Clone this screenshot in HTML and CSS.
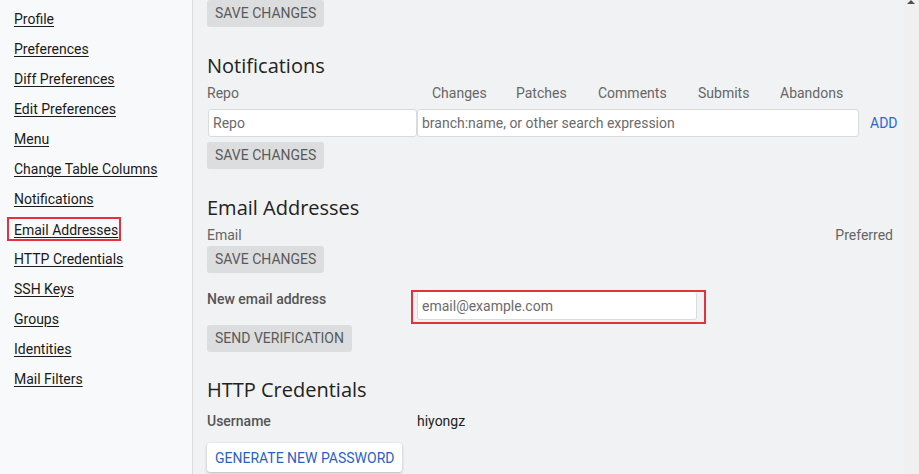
FILE: index.html
```html
<!DOCTYPE html>
<html>
<head>
<meta charset="utf-8">
<link rel="stylesheet" href="styles.css">
</head>
<body>
<div class="page">
  <nav class="sidebar">
    <a class="nav-link" href="#">Profile</a>
    <a class="nav-link" href="#">Preferences</a>
    <a class="nav-link" href="#">Diff Preferences</a>
    <a class="nav-link" href="#">Edit Preferences</a>
    <a class="nav-link" href="#">Menu</a>
    <a class="nav-link" href="#">Change Table Columns</a>
    <a class="nav-link" href="#">Notifications</a>
    <span class="nav-item-marked"><a class="nav-link" href="#">Email Addresses</a></span>
    <a class="nav-link" href="#">HTTP Credentials</a>
    <a class="nav-link" href="#">SSH Keys</a>
    <a class="nav-link" href="#">Groups</a>
    <a class="nav-link" href="#">Identities</a>
    <a class="nav-link" href="#">Mail Filters</a>
  </nav>
  <main class="main">
    <button class="btn btn-top">SAVE CHANGES</button>

    <h2 class="heading h-notif">Notifications</h2>
    <div class="notif-head">
      <span>Repo</span><span>Changes</span><span>Patches</span><span>Comments</span><span>Submits</span><span>Abandons</span>
    </div>
    <div class="notif-inputs">
      <input class="field field-repo" placeholder="Repo">
      <input class="field field-query" placeholder="branch:name, or other search expression">
      <span class="link-btn">ADD</span>
    </div>
    <button class="btn btn-notif">SAVE CHANGES</button>

    <h2 class="heading h-email">Email Addresses</h2>
    <div class="email-head"><span>Email</span><span>Preferred</span></div>
    <button class="btn btn-email">SAVE CHANGES</button>
    <div class="new-email">
      <span class="label-bold">New email address</span>
      <span class="marked-field"><input class="field field-email" placeholder="email@example.com"></span>
    </div>
    <button class="btn btn-verify">SEND VERIFICATION</button>

    <h2 class="heading h-http">HTTP Credentials</h2>
    <div class="user-row"><span class="label-bold">Username</span><span class="value">hiyongz</span></div>
    <button class="btn-white">GENERATE NEW PASSWORD</button>
  </main>
  <div class="scrollbar"><span class="arrow"></span></div>
</div>
</body>
</html>
```

FILE: styles.css
```css
* { box-sizing: border-box; }
html, body { margin: 0; padding: 0; height: 100%; overflow: hidden; }
body { font-family: Roboto, "Liberation Sans", sans-serif; font-size: 14px; color: #222; background: #f1f2f3; }

.page { display: flex; height: 474px; }

.sidebar {
  width: 193px;
  flex: none;
  background: #f8f9fa;
  border-right: 1px solid #dcdcdc;
  padding: 4px 0 0 14px;
  display: flex;
  flex-direction: column;
  align-items: flex-start;
}
.nav-link {
  display: block;
  height: 30px;
  line-height: 30px;
  color: #1a1a1a;
  text-decoration: underline;
  text-underline-offset: 2px;
}
.nav-item-marked {
  display: flex;
  align-items: center;
  height: 30px;
}
.nav-item-marked .nav-link {
  height: 24px;
  line-height: 20px;
  padding: 1px 1px 1px 5px;
  margin-left: -7px;
  border: 2px solid #e6303b;
}

.main {
  flex: 1;
  min-width: 0;
  padding: 0 11px 0 14px;
  display: flex;
  flex-direction: column;
  align-items: flex-start;
}

.btn {
  font-family: Roboto, "Liberation Sans", sans-serif;
  font-size: 14px;
  color: #5a5a5a;
  background: #dcddde;
  border: none;
  border-radius: 3px;
  height: 27px;
  padding: 0 8px;
  margin: 0;
  line-height: 27px;
}
.btn-top { margin-top: 0; }
.btn-notif { margin-top: 5px; }
.btn-email { margin-top: 1px; }
.btn-verify { margin-top: 1px; }

.heading {
  font-family: "Open Sans", "DejaVu Sans", sans-serif;
  font-weight: 400;
  font-size: 20px;
  line-height: 28px;
  color: #222;
  margin: 0;
}
.h-notif { margin-top: 25px; }
.h-email { margin-top: 25px; }
.h-http { margin-top: 24px; }

.notif-head {
  margin-top: 3px;
  display: grid;
  grid-template-columns: 225px 84px 82px 100px 82px auto;
  line-height: 20px;
  color: #666;
}
.notif-inputs {
  margin-top: 6px;
  display: flex;
  align-items: center;
  margin-left: 1px;
  flex: none;
}
.field {
  font-family: Roboto, "Liberation Sans", sans-serif;
  font-size: 14px;
  height: 28px;
  border: 1px solid #dadbdd;
  border-radius: 3px;
  background: #fff;
  padding: 0 4px;
  color: #222;
  outline: none;
  flex: none;
}
.field::placeholder { color: #6b6b6b; }
.field-repo { width: 209px; }
.field-query { width: 442px; }
.link-btn { margin-left: 11px; color: #2a66d9; flex: none; }

.email-head {
  margin-top: 3px;
  align-self: stretch;
  display: flex;
  justify-content: space-between;
  line-height: 20px;
  color: #666;
}

.new-email {
  margin-top: 16px;
  display: flex;
  align-items: flex-start;
  line-height: 20px;
}
.label-bold { font-weight: 500; color: #555; width: 204px; display: inline-block; flex: none; }
.marked-field {
  margin-top: 1px;
  border: 2px solid #e6303b;
  padding: 0 7px 2px 4px;
  display: flex;
}
.field-email { width: 280px; height: 28px; border-top-color: transparent; }

.user-row {
  margin-top: 7px;
  display: flex;
  line-height: 20px;
}
.user-row .label-bold { width: 210px; }
.value { color: #222; }

.btn-white {
  margin-top: 12px;
  font-family: Roboto, "Liberation Sans", sans-serif;
  font-size: 14px;
  color: #2a5fc9;
  background: #fff;
  border: none;
  border-radius: 3px;
  height: 29px;
  padding: 0 8px;
  box-shadow: 0 1px 3px rgba(0,0,0,0.25);
}

.scrollbar {
  width: 15px;
  flex: none;
  background: #f0f0f0;
  position: relative;
}
.arrow {
  position: absolute;
  top: 0;
  left: 3px;
  width: 0;
  height: 0;
  border-left: 4px solid transparent;
  border-right: 4px solid transparent;
  border-bottom: 4px solid #505050;
}
```
